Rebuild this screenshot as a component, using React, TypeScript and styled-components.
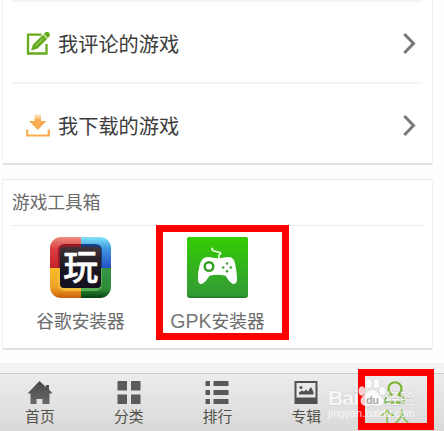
import React from "react";
import styled, { createGlobalStyle } from "styled-components";

const Global = createGlobalStyle`
  * { box-sizing: border-box; }
  body { margin: 0; background: #fff; font-family: "Noto Sans CJK SC", sans-serif; overflow: hidden; }
  svg { display: block; }
`;

const Screen = styled.div`
  position: relative;
  width: 444px;
  height: 431px;
  display: flex;
  flex-direction: column;
  background: #fefefe;
  overflow: hidden;
`;

const Card = styled.section<{ $height: number; $open?: boolean }>`
  width: 431px;
  height: ${(p) => p.$height}px;
  margin-left: 2px;
  padding: 0 10px;
  flex: none;
  background: #fff;
  border: 1px solid #f1f1f1;
  border-top: ${(p) => (p.$open ? "0" : "1px solid #ececec")};
  border-bottom: 2px solid #e0e0e0;
  border-radius: ${(p) => (p.$open ? "0 0 2px 2px" : "2px")};
`;

const Gap = styled.div`
  height: 14px;
  flex: none;
`;

const MenuRow = styled.div`
  height: 82px;
  display: flex;
  align-items: center;
  margin: 0 0 0 -1px;
  border-top: 2px solid #f4f4f4;
  padding: 3px 6px 0 14px;
`;

const MenuLabel = styled.span`
  flex: 1;
  margin-left: 8px;
  font-size: 20.2px;
  line-height: 30px;
  color: #3c3c3c;
  white-space: nowrap;
`;

const ToolTitle = styled.h2`
  margin: 0 -1px;
  height: 46px;
  padding-top: 8px;
  font-size: 17.7px;
  line-height: 27px;
  font-weight: 400;
  color: #6a6a6a;
  border-bottom: 1px solid #ebebeb;
`;

const Tools = styled.div`
  display: flex;
  margin-left: -1px;
  padding-top: 11px;
`;

const Tool = styled.div`
  width: 137px;
  display: flex;
  flex-direction: column;
  align-items: center;
`;

const ToolName = styled.span`
  margin-top: 9px;
  font-size: 17.7px;
  line-height: 27px;
  color: #6a6a6a;
  white-space: nowrap;
`;

const Latin = styled.span`
  font-family: "Liberation Sans", sans-serif;
  font-size: 19.5px;
  line-height: 20px;
  color: #777;
`;

const Nav = styled.nav`
  margin-top: auto;
  height: 68px;
  flex: none;
  display: flex;
  border-top: 10px solid #f4f4f4;
  background: linear-gradient(#c9c9c9 0 1px, #ececec 1px, #d9d9d9);
  background-clip: padding-box;
`;

const NavItem = styled.div<{ $active?: boolean }>`
  width: 88.8px;
  padding: 8px ${(p) => (p.$active ? 10 : 9)}px 0 0;
  display: flex;
  flex-direction: column;
  align-items: center;
  color: ${(p) => (p.$active ? "#76b52a" : "#505048")};
`;

const NavLabel = styled.span`
  font-size: 14.8px;
  line-height: 22px;
`;

const Marker = styled.div<{ $x: number; $y: number; $w: number; $h: number }>`
  position: absolute;
  left: ${(p) => p.$x}px;
  top: ${(p) => p.$y}px;
  width: ${(p) => p.$w}px;
  height: ${(p) => p.$h}px;
  border: 7px solid #f00;
`;

const Watermark = styled.svg`
  position: absolute;
  left: 324px;
  top: 374px;
`;

const EditIcon = () => (
  <svg width="24" height="24" viewBox="0 0 24 24">
    <path d="M15.500 2.700H2v18.800h18.500V12" fill="none" stroke="#66ab1c" strokeWidth="2.300" />
    <path d="M5 18.500l2-6L17 2.800l4.200 4.200L11.200 16.700z" fill="#66ab1c" />
    <path d="M17.800 2l1.200-1.200a2.500 2.500 0 0 1 4 4l-1.200 1.200z" fill="#66ab1c" />
    <path d="M9.500 13.700l7.300-7" stroke="#b9df94" strokeWidth="1" />
    <path d="M17 2.600l4.300 4.300" stroke="#9bcb6a" strokeWidth=".7" />
  </svg>
);

const DownloadIcon = () => (
  <svg width="24" height="24" viewBox="0 0 24 24">
    <path d="M8.500 0.500H15v2H8.500z" fill="#fddcb2" />
    <path d="M8.500 2.500H15v2H8.500z" fill="#fbc585" />
    <path d="M8.500 4.500H15V7h5.500l-8.700 9L3 7h5.500z" fill="#f9ad50" />
    <path d="M1.200 15.500v6h21.600v-6" fill="none" stroke="#f9ad50" strokeWidth="2.200" />
  </svg>
);

const Chevron = () => (
  <svg width="14" height="24" viewBox="0 0 14 24">
    <path d="M2.300 2L11.500 11.500l-9.200 9.500" fill="none" stroke="#787878" strokeWidth="3" />
  </svg>
);

const GlyphIcon = () => (
  <svg width="61" height="61" viewBox="0 0 61 61">
    <defs>
      <clipPath id="tile"><rect width="61" height="61" rx="11" /></clipPath>
      <linearGradient id="red" x2="0" y2="1"><stop stopColor="#ef8c80" /><stop offset=".4" stopColor="#d83c3e" /><stop offset="1" stopColor="#c9232b" /></linearGradient>
      <linearGradient id="blue" x2="0" y2="1"><stop stopColor="#83e4fa" /><stop offset=".35" stopColor="#429de0" /><stop offset="1" stopColor="#2450c8" /></linearGradient>
      <linearGradient id="yellow" x2="0" y2="1"><stop stopColor="#fbbd26" /><stop offset=".65" stopColor="#eda126" /><stop offset="1" stopColor="#cb600c" /></linearGradient>
      <linearGradient id="green" x2="0" y2="1"><stop stopColor="#379447" /><stop offset=".7" stopColor="#2c8c38" /><stop offset="1" stopColor="#073f0d" /></linearGradient>
      <linearGradient id="dark" x2="0" y2="1"><stop stopColor="#413436" /><stop offset=".5" stopColor="#1b1621" /><stop offset="1" stopColor="#151020" /></linearGradient>
    </defs>
    <g clipPath="url(#tile)">
      <path d="M0 0h31v31H0z" fill="url(#red)" />
      <path d="M31 0h30v31H31z" fill="url(#blue)" />
      <path d="M0 31h31v30H0z" fill="url(#yellow)" />
      <path d="M31 31h30v30H31z" fill="url(#green)" />
    </g>
    <path d="M31 7H15q-7 0-7 7v17h3V11h20z" fill="#951b28" />
    <path d="M31 7h14q7 0 7 7v17h-3V11H31z" fill="#173d83" />
    <path d="M8 31v15q0 8 8 8h15v-3H11V31z" fill="#f3bc3b" />
    <path d="M31 54h14q7 0 7-8V31h-3v20H31z" fill="#59b153" />
    <rect x="10" y="10" width="41" height="41" rx="4" fill="url(#dark)" />
    <text x="30.700" y="43" textAnchor="middle" fontSize="35" fontWeight="500" fill="#fff" stroke="#fff" strokeWidth=".5" fontFamily="Noto Sans CJK SC, sans-serif">玩</text>
  </svg>
);

const GamepadIcon = () => (
  <svg width="61" height="61" viewBox="0 0 61 61">
    <defs>
      <linearGradient id="pad" x2="0" y2="1"><stop stopColor="#35cc03" /><stop offset="1" stopColor="#339936" /></linearGradient>
    </defs>
    <rect width="61" height="61" rx="3" fill="#247c25" />
    <rect width="61" height="59.500" rx="3" fill="url(#pad)" />
    <path d="M31.800 21v-2q0-1.500 1.500-2 1-1-.5-1.500l-5.800-1.500q-3-.8-1.500-2.700" fill="none" stroke="#efffe9" strokeWidth="1.700" strokeLinecap="round" />
    <path d="M18 20.500q3-1 6.500 0 6.500 1.500 13 0 3.500-1 7 0 3 2 4 8.300 1.500 7 1.500 14-.5 5-4.500 4-4-2.500-7-8-8-2-16 0-3 5.500-7 8-4 1-4.500-4-.5-7 1.500-14 1.500-6.500 5.500-8.300z" fill="#fff" />
    <circle cx="22" cy="29.500" r="4.300" fill="#fff" stroke="#329f20" strokeWidth="2.400" />
    <g fill="#43a735"><circle cx="40" cy="26.500" r="1.300" /><circle cx="40" cy="34.300" r="1.300" /><circle cx="36.200" cy="30.500" r="1.300" /><circle cx="43.800" cy="30.500" r="1.300" /></g>
  </svg>
);

const HomeIcon = () => (
  <svg width="26" height="24" viewBox="0 0 26 24">
    <defs>
      <linearGradient id="ink" x2="0" y2="1"><stop stopColor="#484848" /><stop offset="1" stopColor="#686868" /></linearGradient>
    </defs>
    <path d="M12.500 0L.5 12.500h3V23h6v-5h6v5h7V12.500h3L22 8.500V4h-3v2z" fill="url(#ink)" />
  </svg>
);

const GridIcon = () => (
  <svg width="24" height="24" viewBox="0 0 24 24">
    <path d="M.5 0h9.500v9.500H.5zM14 0h9.500v9.500H14zM.5 13.500H10V23H.5zM14 13.500h9.500V23H14z" fill="#5b5b5b" />
  </svg>
);

const ListIcon = () => (
  <svg width="24" height="24" viewBox="0 0 24 24">
    <path d="M.5 0h4.500v5H.5zM8.500 0h15v5h-15zM.5 9h4.500v5H.5zM8.500 9h15v5h-15zM.5 18h4.500v5H.5zM8.500 18h15v5h-15z" fill="#595959" />
  </svg>
);

const AlbumIcon = () => (
  <svg width="24" height="24" viewBox="0 0 24 24">
    <path d="M.5 0h23v23H.5z" fill="#505050" />
    <path d="M2.500 2h19v14.500h-19z" fill="#e8e8e8" />
    <path d="M5 13.500v-2l3-2 2 1 2-2 2 2 3-4.500 2.500 5v2.500z" fill="#505050" />
    <circle cx="7" cy="6.500" r="1.500" fill="#505050" />
  </svg>
);

const PersonIcon = () => (
  <svg width="24" height="24" viewBox="0 0 24 24">
    <g fill="none" stroke="#76b52a" strokeWidth="2">
      <path d="M8.500 13.500C6.300 12 5.500 9.500 5.500 7.500a6.500 6.300 0 0 1 13 0c0 2-1 4.500-3 6" />
      <path d="M8.500 12.500v1.500q-5 1.500-6 4v3.500h19v-3.500q-1-2.500-6-4v-1.500" />
    </g>
  </svg>
);

const rows = [
  { name: "我评论的游戏", icon: <EditIcon /> },
  { name: "我下载的游戏", icon: <DownloadIcon /> },
];

const tabs = [
  { name: "首页", icon: <HomeIcon /> },
  { name: "分类", icon: <GridIcon /> },
  { name: "排行", icon: <ListIcon /> },
  { name: "专辑", icon: <AlbumIcon /> },
  { name: "个人", icon: <PersonIcon />, active: true },
];

export default function App() {
  return (
    <Screen>
      <Global />
      <Card $height={165} $open>
        {rows.map((r) => (
          <MenuRow key={r.name}>
            {r.icon}
            <MenuLabel>{r.name}</MenuLabel>
            <Chevron />
          </MenuRow>
        ))}
      </Card>
      <Gap />
      <Card $height={171}>
        <ToolTitle>游戏工具箱</ToolTitle>
        <Tools>
          <Tool><GlyphIcon /><ToolName>谷歌安装器</ToolName></Tool>
          <Tool><GamepadIcon /><ToolName><Latin>GPK</Latin>安装器</ToolName></Tool>
        </Tools>
      </Card>
      <Nav>
        {tabs.map((t) => (
          <NavItem key={t.name} $active={t.active}>
            {t.icon}
            <NavLabel>{t.name}</NavLabel>
          </NavItem>
        ))}
      </Nav>
      <Marker $x={156} $y={225} $w={133} $h={115} />
      <Marker $x={358} $y={369} $w={76} $h={61} />
      <Watermark width="96" height="50" viewBox="0 0 96 50">
        <g fill="#fff" fillOpacity=".8" stroke="#999" strokeOpacity=".5" strokeWidth=".6" paintOrder="stroke" fontFamily="Liberation Sans, sans-serif">
          <text x="4" y="31" fontSize="21" fontWeight="700" textLength="31">Bai</text>
          <ellipse cx="38" cy="17" rx="3.300" ry="4.600" />
          <ellipse cx="44.500" cy="9.500" rx="3.300" ry="4.700" />
          <ellipse cx="52.500" cy="9.500" rx="3.300" ry="4.700" />
          <ellipse cx="58.500" cy="17" rx="3.300" ry="4.300" />
          <path d="M48.500 15.500c4 0 6 5 9 7 5 5 1 9.500-3 9.500q-6-1-12 0c-5 0-8-5-4-9.500 4-3 5-7 10-7z" />
          <text x="61" y="30" fontSize="15" fontWeight="500" fontFamily="Noto Sans CJK SC, sans-serif">经验</text>
          <text x="4" y="43" fontSize="10.500" textLength="87" stroke="none">jingyan.baidu.com</text>
        </g>
        <text x="42" y="29.500" fontSize="11" fontWeight="700" textLength="13" fill="#a9a9a9" fontFamily="Liberation Sans, sans-serif">du</text>
      </Watermark>
    </Screen>
  );
}
